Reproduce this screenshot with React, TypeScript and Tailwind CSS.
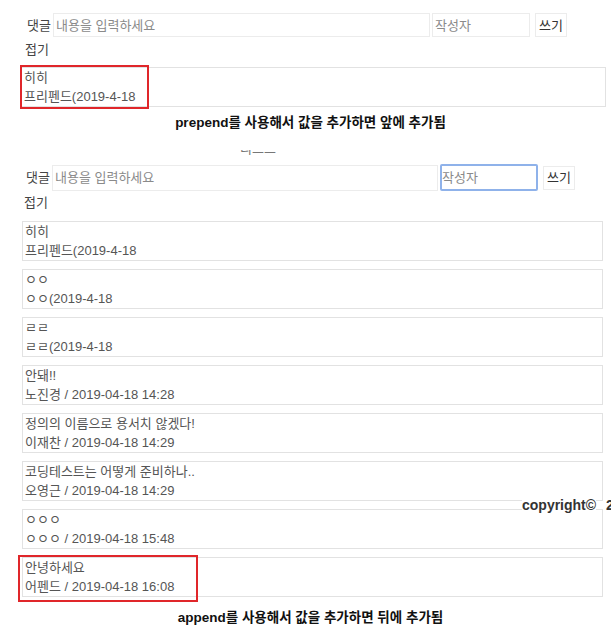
import React from "react";

type Comment = { text: string; meta: string };

const prepended: Comment[] = [{ text: "히히", meta: "프리펜드(2019-4-18" }];

const appended: Comment[] = [
  { text: "히히", meta: "프리펜드(2019-4-18" },
  { text: "ㅇㅇ", meta: "ㅇㅇ(2019-4-18" },
  { text: "ㄹㄹ", meta: "ㄹㄹ(2019-4-18" },
  { text: "안돼!!", meta: "노진경 / 2019-04-18 14:28" },
  { text: "정의의 이름으로 용서치 않겠다!", meta: "이재찬 / 2019-04-18 14:29" },
  { text: "코딩테스트는 어떻게 준비하나..", meta: "오영근 / 2019-04-18 14:29" },
  { text: "ㅇㅇㅇ", meta: "ㅇㅇㅇ / 2019-04-18 15:48" },
  { text: "안녕하세요", meta: "어펜드 / 2019-04-18 16:08" },
];

function CommentForm({ variant }: { variant: "first" | "second" }) {
  const first = variant === "first";
  return (
    <>
      <div className={first ? "flex items-center pl-[27px]" : "flex items-center pl-[26px]"}>
        <span className="w-[26px] text-[#444]">댓글</span>
        <input
          readOnly
          placeholder="내용을 입력하세요"
          className={
            first
              ? "w-[377px] h-[24px] border border-[#ececec] px-[2px] outline-none placeholder:text-[#8a8a8a]"
              : "w-[386px] h-[26px] border border-[#ececec] px-[2px] outline-none placeholder:text-[#8a8a8a]"
          }
        />
        <input
          readOnly
          placeholder="작성자"
          className={
            first
              ? "ml-[2px] w-[98px] h-[24px] border border-[#ececec] px-[2px] outline-none placeholder:text-[#8a8a8a]"
              : "ml-[2px] w-[98px] h-[27px] border-2 border-[#8fb2ea] rounded-[2px] px-0 outline-none placeholder:text-[#8a8a8a]"
          }
        />
        <button className="ml-[5px] w-[32px] h-[24px] border border-[#ececec] bg-white text-[#333]">
          쓰기
        </button>
      </div>
      <div className={first ? "mt-[3px] ml-[25px] text-[#444]" : "mt-[2px] ml-[24px] text-[#444]"}>
        접기
      </div>
    </>
  );
}

function CommentBox({ c, mark, wide }: { c: Comment; mark?: "top" | "bottom"; wide?: boolean }) {
  return (
    <div
      className={
        wide
          ? "relative ml-[21px] w-[585px] border border-[#e2e2e2] text-[#555]"
          : "relative ml-[22px] w-[581px] border border-[#e2e2e2] text-[#555]"
      }
    >
      <div className="pl-[2px]">{c.text}</div>
      <div className="pl-[2px]">{c.meta}</div>
      {mark === "top" && (
        <div className="absolute -left-[2px] -top-[3px] w-[129px] h-[44px] border-2 border-[#e0262a]" />
      )}
      {mark === "bottom" && (
        <div className="absolute -left-[5px] -top-[3px] w-[180px] h-[47px] border-2 border-[#e0262a]" />
      )}
    </div>
  );
}

export default function App() {
  return (
    <div className="relative w-[611px] h-[642px] overflow-hidden bg-white text-[13px] leading-[19px] font-['Liberation_Sans','Noto_Sans_CJK_KR',sans-serif]">
      {/* 첫번째 캡처: prepend */}
      <section className="pt-[13px]">
        <CommentForm variant="first" />
        <div className="mt-[8px]">
          {prepended.map((c, i) => (
            <CommentBox key={i} c={c} mark="top" wide />
          ))}
        </div>
        <p className="mt-[8px] pl-[10px] text-center text-[13.5px] leading-[16px] font-bold text-[#111]">
          prepend를 사용해서 값을 추가하면 앞에 추가됨
        </p>
        {/* 잘린 제목 */}
        <div className="mt-[19px] ml-[240px] h-[7px] overflow-hidden">
          <div className="-mt-[9px] text-[13px] leading-[16px] text-[#777]">리스트</div>
        </div>
      </section>

      {/* 두번째 캡처: append */}
      <section className="pt-[7px]">
        <CommentForm variant="second" />
        <div className="mt-[9px] flex flex-col gap-[8px]">
          {appended.map((c, i) => (
            <CommentBox key={i} c={c} mark={i === appended.length - 1 ? "bottom" : undefined} />
          ))}
        </div>
        <p className="mt-[13px] pl-[10px] text-center text-[13.5px] leading-[16px] font-bold text-[#111]">
          append를 사용해서 값을 추가하면 뒤에 추가됨
        </p>
      </section>

      <div className="absolute left-[522px] top-[497px] flex text-[14px] leading-[16px] font-bold text-[#333]">
        <span className="bg-white">copyright©</span>
        <span className="ml-[10px]">2019</span>
      </div>
    </div>
  );
}
